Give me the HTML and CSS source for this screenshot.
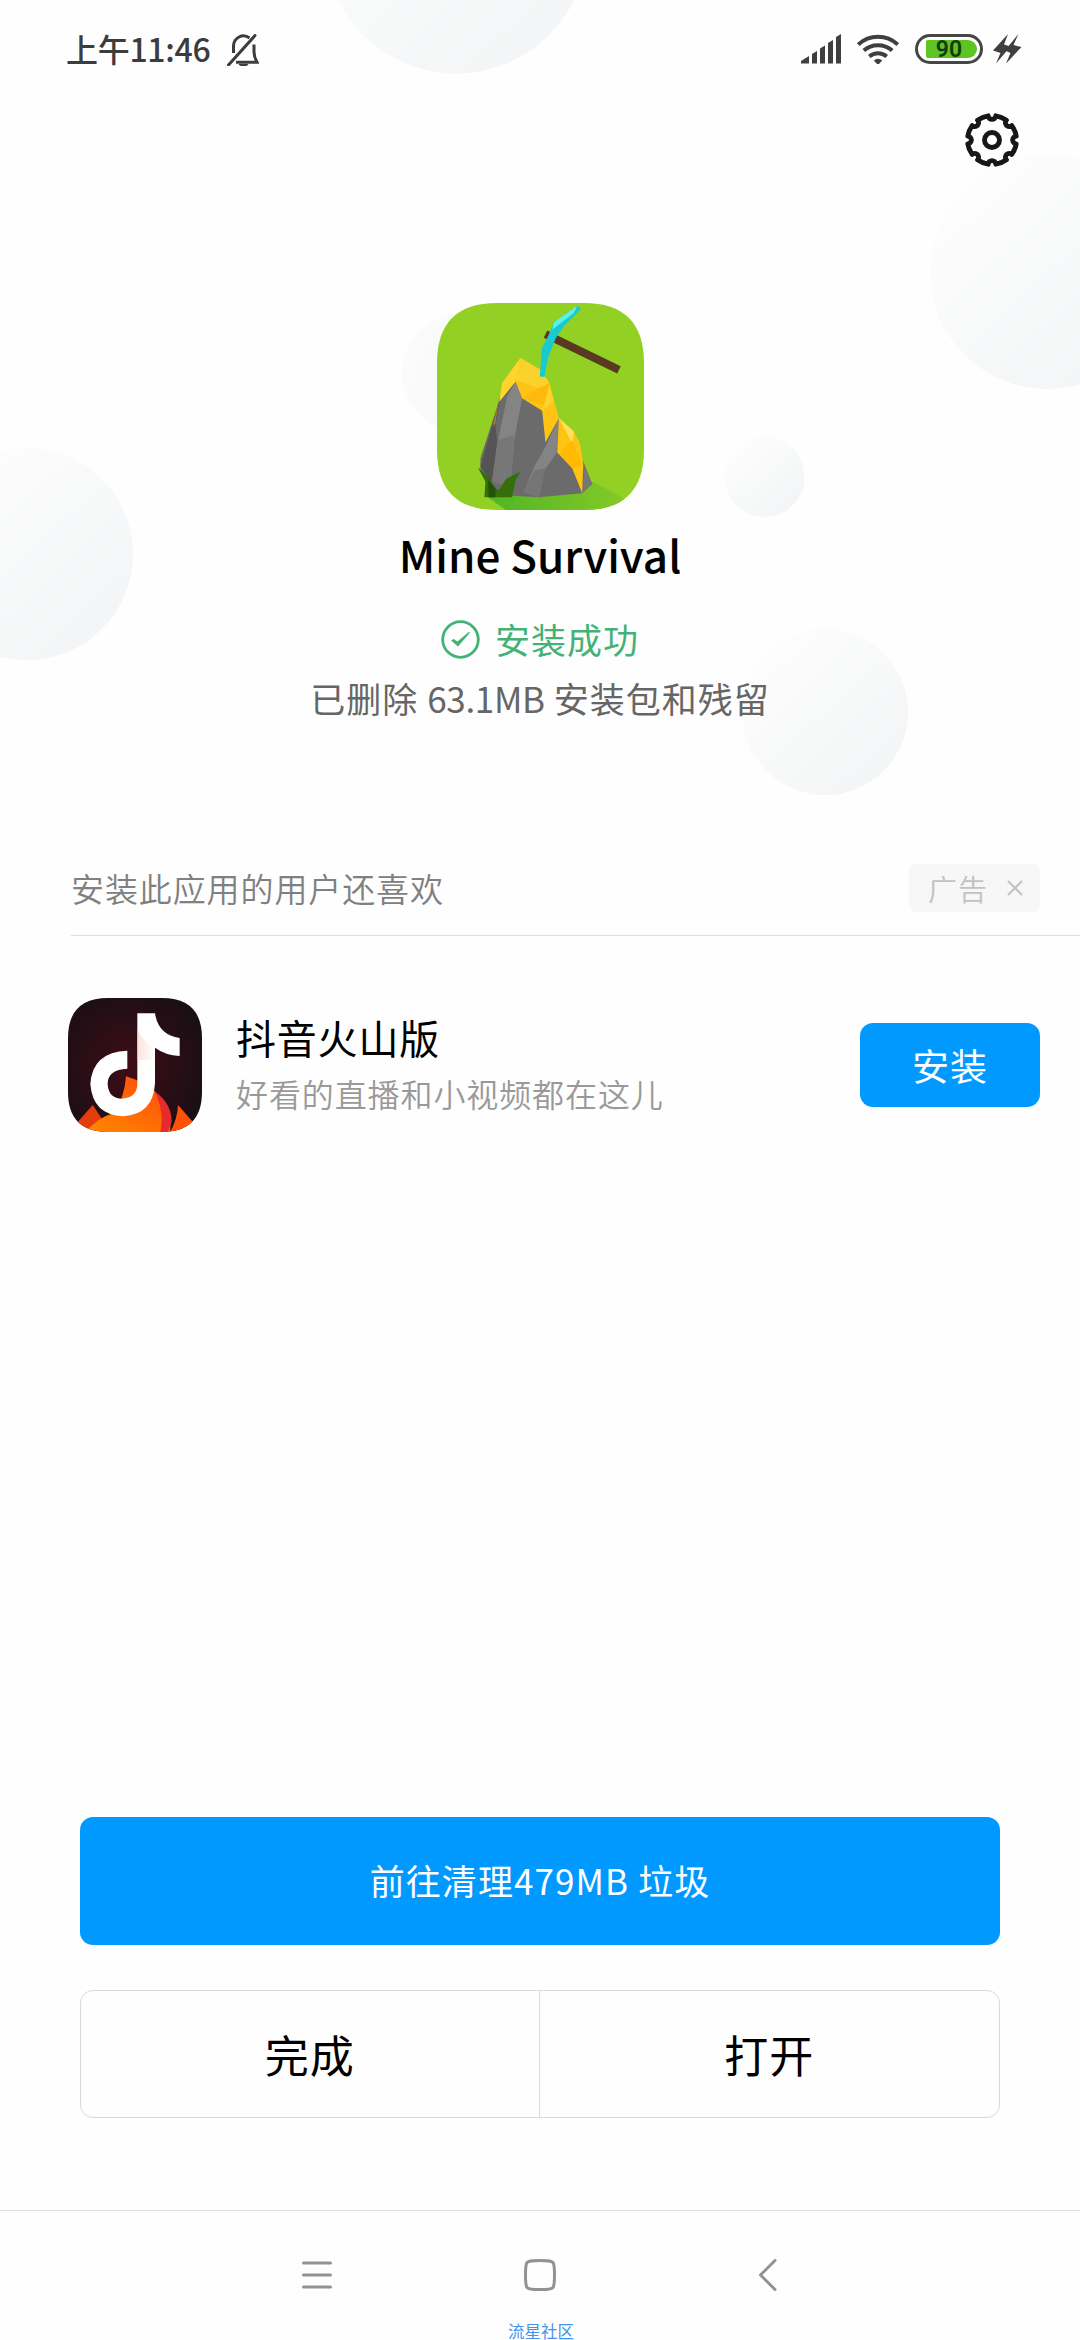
FILE: index.html
```html
<!DOCTYPE html>
<html lang="zh-CN">
<head>
<meta charset="utf-8">
<title>Mine Survival</title>
<link rel="stylesheet" href="styles.css">
</head>
<body>
<div class="screen">
  <svg class="bubbles" viewBox="0 0 1080 860" aria-hidden="true">
    <defs>
      <linearGradient id="bubble" x1="0.1" y1="0.15" x2="0.8" y2="0.9">
        <stop offset="0" stop-color="#fdfdfd"/>
        <stop offset="1" stop-color="#f3f5f6"/>
      </linearGradient>
      <linearGradient id="bubbleSoft" x1="0" y1="0.3" x2="1" y2="0.7">
        <stop offset="0" stop-color="#fbfbfb"/>
        <stop offset="1" stop-color="#f7f7f8"/>
      </linearGradient>
    </defs>
    <g fill="url(#bubble)">
      <circle cx="456" cy="-58" r="131.5"/>
      <circle cx="1047" cy="272" r="117"/>
      <circle cx="27" cy="554" r="106"/>
      <circle cx="764.5" cy="477" r="40"/>
      <circle cx="825" cy="712" r="83"/>
    </g>
    <circle cx="461" cy="373" r="59" fill="url(#bubbleSoft)"/>
  </svg>

  <header class="status">
    <div class="status-left">
      <span class="clock">上午11:46</span>
      <svg class="bell" viewBox="0 0 32 32" width="32" height="32">
        <g fill="none" stroke="#3c3c3c" stroke-width="3">
          <path d="M6.500 19V12.500a10 10.500 0 0 1 16-8.500M27 10.500V18q0 5 3 10.200H9" />
          <path d="M1.500 31L28 1.500" stroke-linecap="round"/>
        </g>
        <path d="M11.500 30h10q-1.500 2.600-5 2.600t-5-2.600z" fill="#3c3c3c"/>
      </svg>
    </div>
    <div class="status-right">
      <svg class="signal" viewBox="0 0 40 30" width="40" height="30" fill="#3f3f3f">
        <path d="M0 29.500V27l8-5v7.500zM11 29.500V20l5-3v12.500zM19 29.500V14.500l5-3v18zM27 29.500V9l5-3v23.500zM35 29.500V3l5-3v29.500z"/>
      </svg>
      <svg class="wifi" viewBox="0 0 42 30" width="42" height="30">
        <g fill="none" stroke="#3f3f3f" stroke-width="4">
          <path d="M1.200 10.500a29 29 0 0 1 39.600 0"/>
          <path d="M6.800 16.600a21.500 21.500 0 0 1 28.400 0"/>
          <path d="M12.300 22.500a13.500 13.500 0 0 1 17.400 0"/>
        </g>
        <path d="M16.800 26.500q4.200-3.600 8.400 0l-3 3.200q-1.200 .800-2.400 0z" fill="#3f3f3f"/>
      </svg>
      <span class="battery"><span class="charge">90</span></span>
      <svg class="bolt" viewBox="0 0 29 30" width="29" height="30" fill="#3f3f3f">
        <path d="M15 0L0 16.500l7.500 2.500L3 29.500 17.500 12.500 11 10.500z"/>
        <path d="M25.500 0L12 16.500l5.500 2.500-4.500 10.500L28.500 13 20.500 11z"/>
      </svg>
    </div>
  </header>

  <div class="toolbar">
    <svg class="gear" viewBox="-28 -28 56 56" width="56" height="56">
      <g fill="none" stroke="#161718" stroke-width="4.900" stroke-linejoin="round">
        <path d="M24.200 3.830A24.500 24.500 0 0 1 19.820 14.400A3.840 3.840 0 0 0 14.400 19.820A24.500 24.500 0 0 1 3.830 24.200A3.840 3.840 0 0 0 -3.830 24.200A24.500 24.500 0 0 1 -14.400 19.820A3.840 3.840 0 0 0 -19.820 14.400A24.500 24.500 0 0 1 -24.200 3.830A3.840 3.840 0 0 0 -24.200 -3.830A24.500 24.500 0 0 1 -19.820 -14.400A3.840 3.840 0 0 0 -14.400 -19.820A24.500 24.500 0 0 1 -3.830 -24.200A3.840 3.840 0 0 0 3.830 -24.200A24.500 24.500 0 0 1 14.400 -19.820A3.840 3.840 0 0 0 19.820 -14.400A24.500 24.500 0 0 1 24.200 -3.830A3.840 3.840 0 0 0 24.200 3.830Z"/>
        <circle r="7.500"/>
      </g>
    </svg>
  </div>

  <section class="hero">
    <svg class="app-icon" viewBox="110 70 620 620" width="207" height="207">
      <defs>
        <clipPath id="tile"><path d="M110 250C110 130 170 70 290 70H550C670 70 730 130 730 250V510C730 630 670 690 550 690H290C170 690 110 630 110 510Z"/></clipPath>
        <linearGradient id="shade" x1="0" y1="0" x2="1" y2="0">
          <stop offset="0" stop-color="#4fb525"/><stop offset="1" stop-color="#86ca25"/>
        </linearGradient>
      </defs>
      <g clip-path="url(#tile)">
        <rect x="110" y="70" width="620" height="620" fill="#92d124"/>
        <path d="M260 650L575 605 690 665 640 700H330z" fill="url(#shade)"/>
        <path d="M300 350L240 535V570L300 645 415 652 545 640 575 612 548 545 475 415 420 370 345 305z" fill="#6c6b6b"/>
        <path d="M300 350L285 440 290 480 275 610 240 560z" fill="#555354"/>
        <path d="M345 305L365 355 342 475 330 620 275 605 293 480 320 350z" fill="#858485"/>
        <path d="M293 480L342 465 330 620 275 605z" fill="#787777"/>
        <path d="M475 415L468 520 432 570 415 652 370 635 402 560 435 500z" fill="#858485"/>
        <path d="M402 570L435 565 415 652 370 635z" fill="#767575"/>
        <path d="M548 550L575 612 548 635z" fill="#777"/>
        <path d="M360 235L305 310 297 365 345 305 365 355 425 393 435 487 475 415 470 518 515 565 545 640 548 550 538 490 520 455 474 412 447 310 420 270z" fill="#ffc413"/>
        <path d="M360 235L305 310 297 365 345 305z" fill="#ffd52c"/>
        <path d="M360 235L345 300 415 325 447 310 420 270z" fill="#fbd12c"/>
        <path d="M447 310L415 325 365 355 430 375 460 365z" fill="#ffb90c"/>
        <path d="M460 365L425 393 447 315z" fill="#ffd22d"/>
        <path d="M475 415L520 455 515 490z" fill="#ffe05a"/>
        <path d="M515 480L475 520 515 565 543 555z" fill="#ffb900"/>
        <path d="M297 350L285 430 277 440z" fill="#ae7c27"/>
        <path d="M435 163L655 270" stroke="#593920" stroke-width="24"/>
        <path d="M530 78L460 128 445 165 424 205 418 290 432 292 442 235 466 175 490 140 542 88z" fill="#18cbd1"/>
        <path d="M530 78L460 128 455 150 520 100z" fill="#5df0e5"/>
        <path d="M232 562L263 590 285 625 295 630 318 596 360 575 345 602 335 652H252L255 605z" fill="#356f0a"/>
        <path d="M263 600L285 625 285 652H265z" fill="#225407"/>
      </g>
    </svg>
    <h1 class="title">Mine Survival</h1>
    <p class="result">
      <svg viewBox="0 0 39 39" width="39" height="39">
        <circle cx="19.500" cy="19.500" r="17.800" fill="none" stroke="#44b275" stroke-width="2.800"/>
        <path d="M10 20.500l2.500-1.500 4 2.500 10.500-9 2.500-.500L17 26.500z" fill="#44b275"/>
      </svg>
      <span class="result-text">安装成功</span>
    </p>
    <p class="detail">已删除 <span class="size">63.1MB</span> 安装包和残留</p>
  </section>

  <section class="suggest">
    <div class="suggest-head">
      <h2 class="suggest-title">安装此应用的用户还喜欢</h2>
      <span class="ad"><span class="ad-text">广告</span>
        <svg viewBox="0 0 16 16" width="16" height="16"><path d="M1 1l14 14M15 1L1 15" stroke="#c2c2c2" stroke-width="2"/></svg>
      </span>
    </div>
    <div class="suggest-row">
      <svg class="dy" viewBox="24 54 402 402" width="134" height="134">
        <defs>
          <clipPath id="dyTile"><path d="M24 174C24 94 64 54 144 54H306C386 54 426 94 426 174V336C426 416 386 456 306 456H144C64 456 24 416 24 336Z"/></clipPath>
          <radialGradient id="night" cx="0.45" cy="0.5" r="0.6">
            <stop offset="0" stop-color="#400c17"/><stop offset="1" stop-color="#190f14"/>
          </radialGradient>
          <linearGradient id="lava" x1="0" y1="1" x2="0.8" y2="0">
            <stop offset="0" stop-color="#ff8a00"/><stop offset="1" stop-color="#ff4d0a"/>
          </linearGradient>
          <linearGradient id="stem" x1="0" y1="0" x2="1" y2="0">
            <stop offset="0" stop-color="#f9cfc4"/><stop offset="1" stop-color="#fff"/>
          </linearGradient>
        </defs>
        <g clip-path="url(#dyTile)">
          <rect x="24" y="54" width="402" height="402" fill="url(#night)"/>
          <path d="M50 430L98 375 135 430 90 460H40z" fill="#e43d0c"/>
          <path d="M198 289Q305 320 333 410L330 460H70Q120 410 160 400 195 350 198 289z" fill="url(#lava)"/>
          <path d="M285 335Q335 370 335 425L322 460H300Q315 400 285 335z" fill="#e92a2c"/>
          <path d="M354 375L402 430 390 460H328Q352 420 354 375z" fill="#ff5108"/>
          <path d="M202 212V266Q143 268 143 312 145 356 187 356 232 353 232 310V100H285Q295 165 359 174V228Q315 225 285 203V310Q280 403 190 409 98 405 91 312 97 216 202 212z" fill="#fff"/>
          <path d="M232 145Q250 190 285 205V240H232z" fill="url(#stem)" opacity=".6"/>
        </g>
      </svg>
      <div class="app-info">
        <div class="app-name">抖音火山版</div>
        <div class="app-desc">好看的直播和小视频都在这儿</div>
      </div>
      <button class="install">安装</button>
    </div>
  </section>

  <footer class="actions">
    <button class="clean">前往清理479MB 垃圾</button>
    <div class="pair">
      <button class="half">完成</button>
      <button class="half">打开</button>
    </div>
  </footer>

  <nav class="nav">
    <svg viewBox="0 0 32 32" width="32" height="32"><path d="M2.500 4h27M2.500 16h27M2.500 28h27" stroke="#929292" stroke-width="3" stroke-linecap="round"/></svg>
    <svg class="home" viewBox="0 0 32 32" width="32" height="32"><path d="M1.500 16C1.500 9 1.500 5.500 3 3.500 5 1.500 9 1.500 16 1.500S27 1.500 29 3.500C30.500 5.500 30.500 9 30.500 16S30.500 26.500 29 28.500C27 30.500 23 30.500 16 30.500S5 30.500 3 28.500C1.500 26.500 1.500 23 1.500 16z" fill="none" stroke="#929292" stroke-width="3"/></svg>
    <svg viewBox="0 0 32 32" width="32" height="32"><path d="M23 1.500L8.500 16 23 30.500" fill="none" stroke="#929292" stroke-width="3" stroke-linecap="round" stroke-linejoin="round"/></svg>
    <span class="mark">流星社区</span>
  </nav>
</div>
</body>
</html>
```

FILE: styles.css
```css
* {
  box-sizing: border-box;
  margin: 0;
  padding: 0;
}

body {
  width: 1080px;
  height: 2340px;
  overflow: hidden;
  background: #fefefe;
  font-family: "Noto Sans CJK SC", "Noto Sans", sans-serif;
}

svg {
  display: block;
  flex: none;
}

button {
  border: 0;
  background: none;
  font: inherit;
}

.screen {
  position: relative;
  display: flex;
  flex-direction: column;
  width: 1080px;
  height: 2340px;
  overflow: hidden;
}

.bubbles {
  position: absolute;
  top: 0;
  left: 0;
  z-index: -1;
  width: 1080px;
  height: 860px;
}

.status {
  display: flex;
  justify-content: space-between;
  height: 100px;
  padding: 34px 58px 0 66px;
}

.status-left {
  display: flex;
  gap: 17px;
}

.clock {
  width: 144px;
  font-size: 32px;
  font-weight: 500;
  line-height: 28px;
  letter-spacing: -0.3px;
  color: #3c3c3c;
  white-space: nowrap;
}

.status-right {
  display: flex;
}

.wifi {
  margin-left: 16px;
}

.battery {
  display: flex;
  width: 68px;
  height: 30px;
  margin: 0 10px 0 16px;
  padding: 3px 3px 3px 8px;
  border: 3px solid #454545;
  border-radius: 15px;
}

.charge {
  width: 51px;
  height: 18px;
  padding-right: 5px;
  border-radius: 2px 9px 9px 2px;
  background: #5dc422;
  color: #123d0b;
  font-family: Roboto, sans-serif;
  font-size: 23px;
  font-weight: 600;
  line-height: 19px;
  text-align: center;
}

.toolbar {
  display: flex;
  justify-content: flex-end;
  height: 203px;
  padding: 12px 60px 0 0;
}

.hero {
  display: flex;
  flex-direction: column;
  align-items: center;
  height: 542px;
}

.title {
  margin-top: 14px;
  font-size: 44px;
  font-weight: 500;
  line-height: 60px;
  color: #000;
}

.result {
  display: flex;
  align-items: center;
  gap: 15px;
  height: 40px;
  margin-top: 35px;
  color: #44b275;
}

.result-text {
  font-size: 35px;
  line-height: 40px;
  letter-spacing: 1px;
}

.detail {
  margin-top: 19px;
  font-size: 35px;
  line-height: 40px;
  letter-spacing: 1px;
  color: #666;
}

.size {
  letter-spacing: -0.3px;
}

.suggest-head {
  display: flex;
  align-items: center;
  justify-content: space-between;
  height: 91px;
  margin-left: 71px;
  padding: 0 40px 4px 0;
  border-bottom: 1px solid #dedede;
}

.suggest {
  flex: 1;
}

.suggest-title {
  font-size: 33px;
  font-weight: 350;
  line-height: 40px;
  letter-spacing: 0.9px;
  color: #808080;
}

.ad {
  display: flex;
  align-items: center;
  gap: 19px;
  width: 131px;
  height: 48px;
  padding-left: 19px;
  border-radius: 8px;
  background: #f7f7f7;
  color: #c2c2c2;
}

.ad-text {
  font-size: 29px;
  font-weight: 350;
  line-height: 40px;
  letter-spacing: 1px;
}

.suggest-row {
  display: flex;
  align-items: center;
  height: 134px;
  margin-top: 62px;
  padding: 0 40px 0 68px;
}

.app-info {
  flex: 1;
  padding-left: 34px;
}

.app-name {
  font-size: 40px;
  line-height: 56px;
  letter-spacing: 0.8px;
  color: #000;
}

.app-desc {
  font-size: 32px;
  font-weight: 350;
  line-height: 56px;
  letter-spacing: 0.9px;
  color: #999;
}

.install {
  width: 180px;
  height: 84px;
  border-radius: 13px;
  background: #0099ff;
  color: #fff;
  font-size: 37px;
  line-height: 82px;
  letter-spacing: 1px;
}

.actions {
  display: flex;
  flex-direction: column;
  gap: 45px;
  height: 393px;
  padding: 0 80px;
}

.clean {
  height: 128px;
  padding-bottom: 4px;
  border-radius: 13px;
  background: #0099ff;
  color: #fff;
  font-size: 35px;
  letter-spacing: 1.1px;
}

.pair {
  display: flex;
  height: 128px;
  border: 1px solid #dadada;
  border-radius: 13px;
}

.half {
  flex: 1;
  font-size: 44px;
  letter-spacing: 1px;
  color: #000;
}

.half + .half {
  flex-basis: 3px;
  border-left: 1px solid #dadada;
}

.nav {
  position: relative;
  display: flex;
  justify-content: space-between;
  height: 130px;
  padding: 48px 296px 0 301px;
  border-top: 1px solid #dedede;
}

.home {
  margin-right: 5px;
}

.mark {
  position: absolute;
  top: 112px;
  left: 508px;
  color: #4593ea;
  font-size: 16.500px;
  line-height: 17px;
}
```
